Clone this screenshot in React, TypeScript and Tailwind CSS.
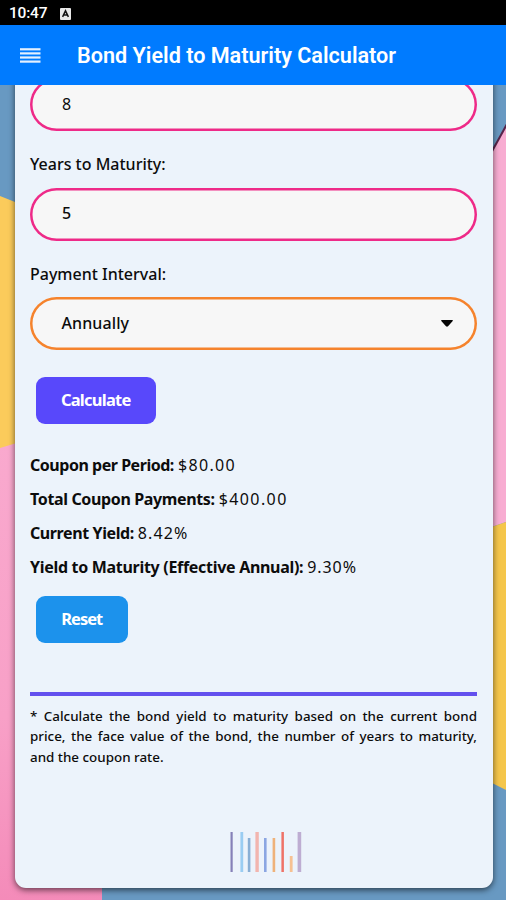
import { useState } from "react";

const results = [
  { label: "Coupon per Period:", value: "$80.00", labelClass: "tracking-[-0.47px]", valueClass: "tracking-[1.35px]" },
  { label: "Total Coupon Payments:", value: "$400.00", labelClass: "tracking-[-0.36px]", valueClass: "tracking-[1.4px]" },
  { label: "Current Yield:", value: "8.42%", labelClass: "tracking-[-0.4px]", valueClass: "tracking-[1.1px]" },
  { label: "Yield to Maturity (Effective Annual):", value: "9.30%", labelClass: "tracking-[-0.3px]", valueClass: "tracking-[0.9px]" },
];

function StatusBar() {
  return (
    <div className="flex h-[25px] items-center bg-black pl-[9px] pt-[3px] font-[Roboto,sans-serif] text-white">
      <span className="w-[51px] text-[15.5px] font-medium leading-none tracking-[-0.2px]">10:47</span>
      <svg className="mt-[-1px]" width="11" height="12" viewBox="0 0 11 12">
        <rect width="11" height="12" rx="1" fill="#e8e8e8" />
        <path d="M2.6 8.8 5.5 2.8l2.9 6M3.8 7h3.4" fill="none" stroke="#111" strokeWidth="1.5" />
      </svg>
    </div>
  );
}

function Header() {
  return (
    <header className="flex h-[59.5px] items-center bg-[#007bff] pl-5 pt-[2px] font-[Roboto,sans-serif] text-white">
      <svg className="mr-[36px] mt-[-1px]" width="21" height="15" viewBox="0 0 21 15" fill="#e4f0ff">
        <rect y="0.2" width="20.5" height="2.2" />
        <rect y="4.3" width="20.5" height="2.2" />
        <rect y="8.4" width="20.5" height="2.2" />
        <rect y="12.5" width="20.5" height="2.2" />
      </svg>
      <h1 className="whitespace-nowrap text-[21.6px] font-semibold leading-none">Bond Yield to Maturity Calculator</h1>
    </header>
  );
}

function Wallpaper() {
  return (
    <svg className="absolute inset-0" width="506" height="816" viewBox="0 84 506 816">
      <defs>
        <linearGradient id="pink" x1="0" y1="440" x2="0" y2="900" gradientUnits="userSpaceOnUse">
          <stop offset="0" stopColor="#f9a9ce" />
          <stop offset="0.6" stopColor="#f8a0c7" />
          <stop offset="1" stopColor="#f48bb9" />
        </linearGradient>
      </defs>
      <rect y="84" width="506" height="816" fill="#6899c2" />
      <path d="M0 195 30 207V450H0z" fill="#fbcb5b" />
      <path d="M0 447 30 438 102 800V900H0z" fill="url(#pink)" />
      <path d="M506 125 480 172V530L506 521z" fill="#f8add2" />
      <path d="M507 123 480 172" stroke="#57254a" strokeWidth="2" />
      <path d="M480 530 506 521V789L480 776z" fill="#f5c64b" />
    </svg>
  );
}

function Bars() {
  return (
    <svg width="72" height="42" viewBox="230 831 72 42">
      <rect x="230.5" y="832" width="2.2" height="40" fill="#8681b8" />
      <rect x="240.4" y="832" width="2.8" height="40" fill="#9acdf2" />
      <rect x="247.8" y="838" width="2.6" height="34" fill="#89afd5" />
      <rect x="255.4" y="832" width="3.4" height="40" fill="#f2b5ae" />
      <rect x="264" y="838" width="2.6" height="34" fill="#8ba6e2" />
      <rect x="272.6" y="838" width="2.6" height="34" fill="#efb27a" />
      <rect x="281.4" y="832" width="2.5" height="40" fill="#ef7267" />
      <rect x="289.8" y="856" width="2.8" height="16" fill="#f6c192" />
      <rect x="297.6" y="832" width="3.6" height="40" fill="#beadd2" />
    </svg>
  );
}

export default function App() {
  const [rate, setRate] = useState("8");
  const [years, setYears] = useState("5");

  return (
    <div className="flex h-[900px] w-[506px] flex-col overflow-hidden">
      <StatusBar />
      <Header />
      <main className="relative flex-1 overflow-hidden">
        <Wallpaper />
        <div className="relative -mt-[20px] ml-[14.5px] flex h-[823px] w-[478.5px] flex-col rounded-[11px] bg-[#ecf3fb] pl-[15.5px] pr-4 pt-[13px] font-['Noto_Sans',sans-serif] text-[16px] text-[#0c0c0c] shadow-[0_2px_6px_rgba(0,0,0,0.6)]">
          <input
            className="h-[53px] w-full shrink-0 rounded-full bg-[#f7f7f7] px-[32px] shadow-[inset_0_0_0_2.5px_#ee2a88] outline-none"
            value={rate}
            onChange={(e) => setRate(e.target.value)}
          />
          <label className="mt-[21px] h-6 font-medium leading-6">
            <span className="tracking-[0px]">Years to Maturity:</span>
          </label>
          <input
            className="mt-[12.5px] h-[53px] w-full shrink-0 rounded-full bg-[#f7f7f7] px-[32px] pb-1 font-medium shadow-[inset_0_0_0_2.5px_#ee2a88] outline-none"
            value={years}
            onChange={(e) => setYears(e.target.value)}
          />
          <label className="mt-[20.5px] h-6 font-medium leading-6">
            <span className="tracking-[0px]">Payment Interval:</span>
          </label>
          <div className="mt-[11.5px] flex h-[53px] shrink-0 items-center justify-between rounded-full bg-[#f7f7f7] pl-[31.5px] pr-[24px] font-medium shadow-[inset_0_0_0_2.5px_#f5832d]">
            <span className="pb-px tracking-[0.1px]">Annually</span>
            <svg width="12" height="7" viewBox="0 0 12 7">
              <path d="M.8 0h10.4q1.3.3.3 1.3L7 6.3q-1 .8-2 0L.5 1.3Q-.5.3.8 0z" fill="#050505" />
            </svg>
          </div>
          <button className="ml-[6px] mt-[27px] h-[47px] w-[119.5px] shrink-0 rounded-[9px] bg-[#5848fb] text-[16.5px] font-bold text-white">
            <span className="tracking-[-0.75px]">Calculate</span>
          </button>
          <div className="mt-[24.5px]">
            {results.map((r) => (
              <p key={r.label} className="flex h-[33.75px] items-center gap-[4px] whitespace-nowrap">
                <b className={r.labelClass}>{r.label}</b>
                <span className={r.valueClass}>{r.value}</span>
              </p>
            ))}
          </div>
          <button className="ml-[6px] mt-[12.5px] h-[47px] w-[91.5px] shrink-0 rounded-[9px] bg-[#1c92ec] pb-px text-[16.5px] font-bold text-white">
            <span className="tracking-[-1px]">Reset</span>
          </button>
          <div className="mt-[49px] h-[3.5px] shrink-0 bg-[#6350ee]" />
          <p className="mt-[10px] text-justify text-[13.4px] font-medium leading-[20.5px]">
            * Calculate the bond yield to maturity based on the current bond price, the face value of the bond, the number
            of years to maturity, and the coupon rate.
          </p>
          <div className="mt-auto flex justify-center pb-[15px] pl-[25px]">
            <Bars />
          </div>
        </div>
      </main>
    </div>
  );
}
